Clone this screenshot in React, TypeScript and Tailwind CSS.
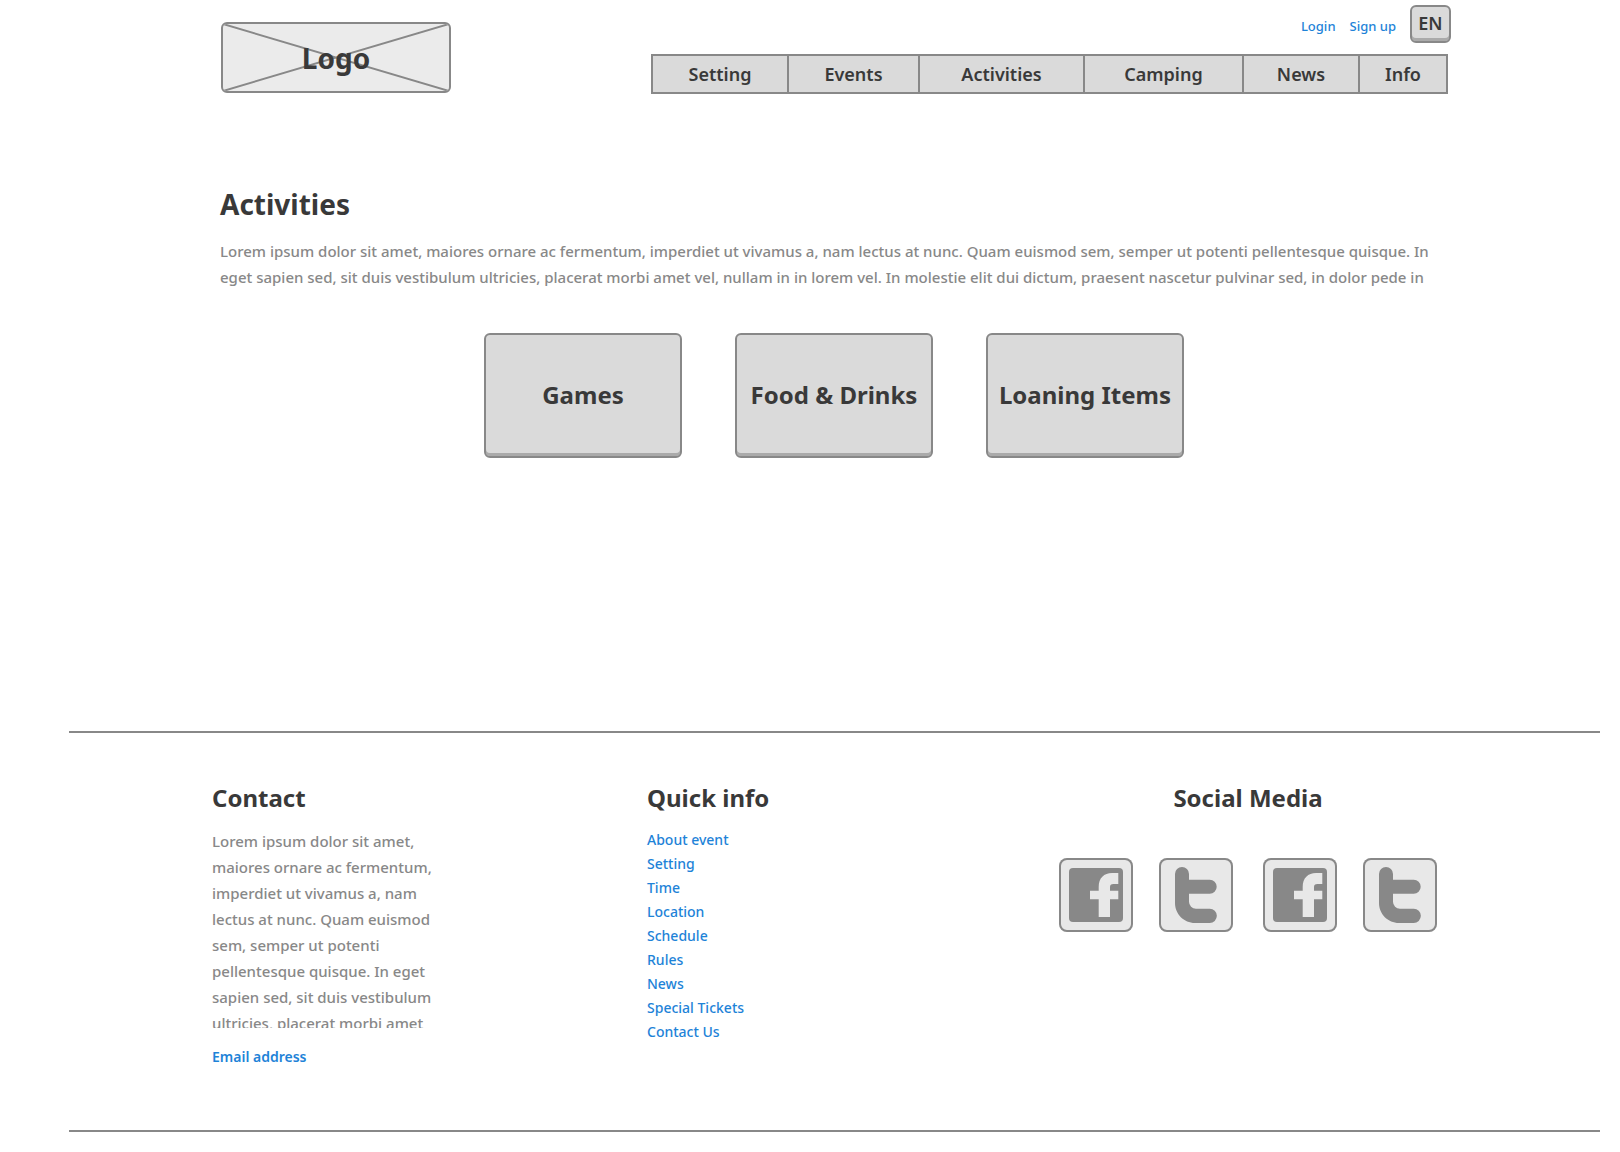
const navItems = ["Setting", "Events", "Activities", "Camping", "News", "Info"];
const cards = ["Games", "Food & Drinks", "Loaning Items"];
const quickLinks = [
  "About event",
  "Setting",
  "Time",
  "Location",
  "Schedule",
  "Rules",
  "News",
  "Special Tickets",
  "Contact Us",
];

function Facebook() {
  return (
    <svg viewBox="0 0 74 74" className="size-full" aria-hidden="true">
      <rect x="10" y="10" width="54" height="54" rx="4" fill="#888888" />
      <path
        d="M39.7 59V41.3H31V32.7H39.7V29C39.7 20 45 15 53 15H59.3V26H54.5C52 26 51 27 51 29V32.7H59.3V41.3H51V59Z"
        fill="#e8e8e8"
      />
    </svg>
  );
}

function Twitter() {
  return (
    <svg viewBox="0 0 74 74" className="size-full" aria-hidden="true">
      <path
        d="M16 16a7 7 0 0 1 14 0V21.7H50.7a7 7 0 0 1 0 14H30V43.7a7 7 0 0 0 7 7H50.7a7.1 7.1 0 0 1 0 14.3H36C25 65 16 56 16 45Z"
        fill="#888888"
      />
    </svg>
  );
}

function SocialPair() {
  return (
    <div className="flex gap-[26px]">
      <a href="#facebook" aria-label="Facebook" className="size-[74px] rounded-lg bg-[#e8e8e8] ring-2 ring-inset ring-[#888888]">
        <Facebook />
      </a>
      <a href="#twitter" aria-label="Twitter" className="size-[74px] rounded-lg bg-[#e8e8e8] ring-2 ring-inset ring-[#888888]">
        <Twitter />
      </a>
    </div>
  );
}

export default function App() {
  return (
    <div className="bg-white font-['Noto_Sans','Open_Sans',sans-serif] text-[#393939]">
      <header className="flex items-start justify-between pt-[5px] pr-[169px] pl-[221px]">
        <a href="#home" className="relative mt-[17px] flex h-[71px] w-[230px] items-center justify-center overflow-hidden rounded-md border-2 border-[#888888] bg-[#ebebeb]">
          <svg viewBox="0 0 226 67" preserveAspectRatio="none" className="absolute inset-0 size-full" aria-hidden="true">
            <path d="M0 0L226 67M226 0L0 67" stroke="#888888" strokeWidth="2" />
          </svg>
          <span className="relative text-[28px] font-bold">Logo</span>
        </a>
        <div className="flex flex-col items-end gap-[11px]">
          <div className="flex items-center gap-[14px] text-[13px] font-medium text-[#1e83d8]">
            <a href="#login" className="pt-1.5">Login</a>
            <a href="#signup" className="pt-1.5">Sign up</a>
            <button type="button" className="h-[38px] w-[41px] rounded-md border-2 border-[#888888] bg-[#dadada] pb-[2px] text-[18px] leading-7 font-semibold text-[#393939] shadow-[inset_0_-3px_0_#aaaaaa]">
              EN
            </button>
          </div>
          <nav className="mr-[3px] grid w-[797px] grid-cols-[134fr_131fr_165fr_159fr_116fr_88fr] border-2 border-[#888888] bg-[#dadada]">
            {navItems.map((item) => (
              <a key={item} href="#nav" className="border-l-2 border-[#888888] text-center text-[18px] leading-9 font-semibold first:border-l-0">
                {item}
              </a>
            ))}
          </nav>
        </div>
      </header>

      <main className="pt-[92px] pr-[169px] pb-[273px] pl-[220px]">
        <h1 className="text-[28px] leading-9 font-bold">Activities</h1>
        <p className="mt-4 text-[15px] leading-[26px] font-medium text-[#888888]">
          Lorem ipsum dolor sit amet, maiores ornare ac fermentum, imperdiet ut vivamus a, nam lectus at nunc. Quam
          euismod sem, semper ut potenti pellentesque quisque. In eget sapien sed, sit duis vestibulum ultricies,
          placerat morbi amet vel, nullam in in lorem vel. In molestie elit dui dictum, praesent nascetur pulvinar sed,
          in dolor pede in
        </p>
        <div className="mt-[43px] flex justify-center gap-[53px] pr-[3px]">
          {cards.map((card) => (
            <button key={card} type="button" className="h-[125px] w-[198px] rounded-md border-2 border-[#888888] bg-[#dadada] pb-[2px] text-[24px] font-bold whitespace-nowrap shadow-[inset_0_-3px_0_#aaaaaa]">
              {card}
            </button>
          ))}
        </div>
      </main>

      <footer className="mr-5 ml-[69px] grid grid-cols-[435fr_412fr_378fr] border-y-2 border-[#888888] pt-[49px] pr-[163px] pb-[63px] pl-[143px]">
        <section>
          <h2 className="text-[24px] leading-8 font-bold">Contact</h2>
          <p className="mt-[14px] h-[200px] w-[235px] overflow-hidden text-[15px] leading-[26px] font-medium text-[#888888]">
            Lorem ipsum dolor sit amet, maiores ornare ac fermentum, imperdiet ut vivamus a, nam lectus at nunc. Quam
            euismod sem, semper ut potenti pellentesque quisque. In eget sapien sed, sit duis vestibulum ultricies,
            placerat morbi amet
          </p>
          <a href="#email" className="mt-[19px] block text-[14px] leading-5 font-semibold text-[#1e83d8]">
            Email address
          </a>
        </section>
        <section>
          <h2 className="text-[24px] leading-8 font-bold">Quick info</h2>
          <ul className="mt-[14px] text-[14px] leading-6 font-medium text-[#1e83d8]">
            {quickLinks.map((link) => (
              <li key={link}>
                <a href="#quick">{link}</a>
              </li>
            ))}
          </ul>
        </section>
        <section>
          <h2 className="text-center text-[24px] leading-8 font-bold">Social Media</h2>
          <div className="mt-11 flex justify-between">
            <SocialPair />
            <SocialPair />
          </div>
        </section>
      </footer>
    </div>
  );
}
